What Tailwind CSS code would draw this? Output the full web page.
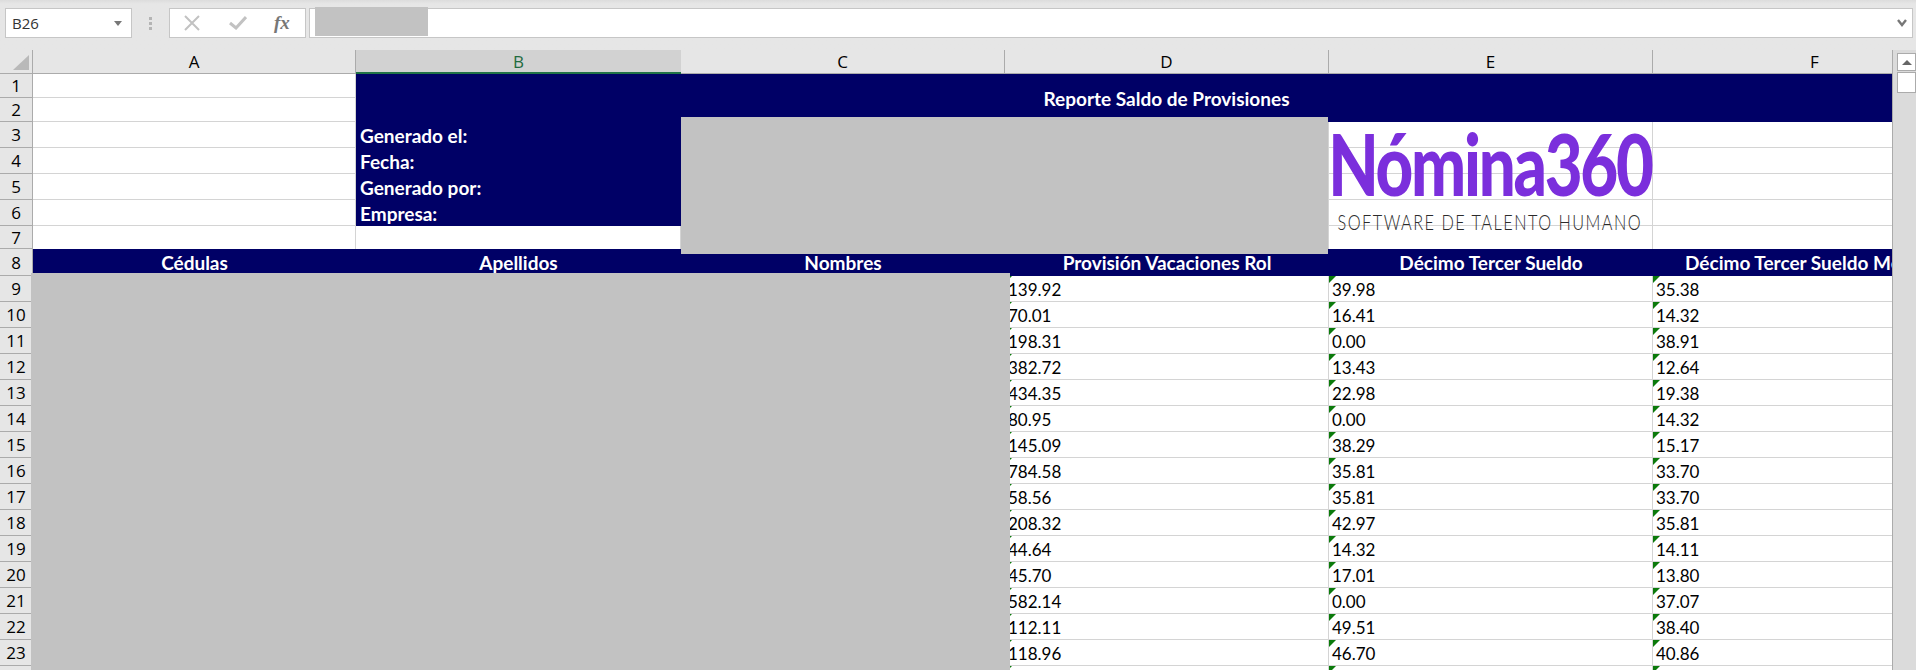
<!DOCTYPE html>
<html lang="es">
<head>
    <meta charset="UTF-8">
    <title>Reporte Saldo de Provisiones</title>
    <script src="https://cdn.jsdelivr.net/npm/@tailwindcss/browser@4"></script>
</head>

<body class="bg-[#e6e6e6] w-[1916px] h-[670px] overflow-hidden relative font-['Lato',sans-serif]">

    <!-- formula bar -->
    <div class="h-[50px] flex items-start pt-2 bg-gradient-to-b from-[#dcdcdc] via-[#e6e6e6] via-[8%] to-[#e6e6e6] font-['Open_Sans',sans-serif]">
        <div class="ml-[5px] w-[127px] h-[30px] bg-white border border-[#c6c6c6] flex items-center justify-between pl-[6px] pr-[9px] text-[15px] text-[#333]">
            <span>B26</span>
            <span class="w-0 h-0 border-x-[4px] border-x-transparent border-t-[5px] border-t-[#777]"></span>
        </div>
        <div class="w-[37px] h-[30px] flex flex-col items-center justify-center gap-[2px]">
            <span class="w-[3px] h-[3px] bg-[#b4b4b4]"></span>
            <span class="w-[3px] h-[3px] bg-[#b4b4b4]"></span>
            <span class="w-[3px] h-[3px] bg-[#b4b4b4]"></span>
        </div>
        <div class="w-[137px] h-[30px] bg-white border border-[#c6c6c6] flex items-center pl-[14px]">
            <svg class="w-[16px] h-[16px]" viewBox="0 0 16 16" fill="none" stroke="#c2c2c2" stroke-width="2"><path d="M1 1 L15 15 M15 1 L1 15"/></svg>
            <svg class="w-[18px] h-[14px] ml-[29px]" viewBox="0 0 18 14" fill="none" stroke="#c2c2c2" stroke-width="3"><path d="M1 7 L7 12 L17 1"/></svg>
            <span class="ml-[27px] font-['Liberation_Serif',serif] italic font-bold text-[19px] text-[#777]">fx</span>
        </div>
        <div class="ml-[3px] w-[1604px] h-[30px] bg-white border border-[#c6c6c6] flex items-center justify-end pr-[5px]">
            <svg class="w-[10px] h-[8px]" viewBox="0 0 10 8" fill="none" stroke="#777" stroke-width="2.4"><path d="M1 1 L5 6 L9 1"/></svg>
        </div>
    </div>

    <div class="flex h-[620px]">
        <!-- sheet -->
        <div id="sheet" class="w-[1893px] shrink-0 overflow-hidden border-r border-[#ababab] grid grid-cols-[33px_323px_325px_324px_324px_324px_324px] grid-rows-[24px_24px_24px_26px_26px_26px_26px_23px_27px] auto-rows-[26px] bg-white text-[17px] leading-none text-black">

            <!-- column headers -->
            <div class="relative bg-[#e6e6e6] border-r border-b border-[#ababab]">
                <span class="absolute right-[3px] bottom-[3px] w-0 h-0 border-l-[16px] border-l-transparent border-b-[15px] border-b-[#b9b9b9]"></span>
            </div>
            <div class="border-r border-b border-[#ababab] bg-[#e6e6e6] flex items-center justify-center font-['Open_Sans',sans-serif] text-[17px]">A</div>
            <div class="bg-[#d2d2d2] border-b-2 border-[#217346] flex items-center justify-center font-['Open_Sans',sans-serif] text-[17px] text-[#1f6b3f]">B</div>
            <div class="border-r border-b border-[#ababab] bg-[#e6e6e6] flex items-center justify-center font-['Open_Sans',sans-serif] text-[17px]">C</div>
            <div class="border-r border-b border-[#ababab] bg-[#e6e6e6] flex items-center justify-center font-['Open_Sans',sans-serif] text-[17px]">D</div>
            <div class="border-r border-b border-[#ababab] bg-[#e6e6e6] flex items-center justify-center font-['Open_Sans',sans-serif] text-[17px]">E</div>
            <div class="border-r border-b border-[#ababab] bg-[#e6e6e6] flex items-center justify-center font-['Open_Sans',sans-serif] text-[17px]">F</div>

            <!-- rows 1-2 -->
            <div class="bg-[#e6e6e6] border-r border-b border-[#ababab] flex items-center justify-center font-['Open_Sans',sans-serif] text-[17px]">1</div>
            <div class="border-r border-b border-[#d4d4d4]"></div>
            <div class="col-span-5 row-span-2 bg-[#000066] text-white font-bold text-[19px] flex items-center justify-center">Reporte Saldo de Provisiones</div>
            <div class="bg-[#e6e6e6] border-r border-b border-[#ababab] flex items-center justify-center font-['Open_Sans',sans-serif] text-[17px]">2</div>
            <div class="border-r border-b border-[#d4d4d4]"></div>

            <!-- rows 3-6 -->
            <div class="bg-[#e6e6e6] border-r border-b border-[#ababab] flex items-center justify-center font-['Open_Sans',sans-serif] text-[17px]">3</div>
            <div class="border-r border-b border-[#d4d4d4]"></div>
            <div class="bg-[#000066] text-white font-bold text-[19px] flex items-center pl-[4px]">Generado el:</div>
            <div class="border-r border-b border-[#d4d4d4]"></div>
            <div class="border-r border-b border-[#d4d4d4]"></div>
            <div class="border-r border-b border-[#d4d4d4]"></div>
            <div class="border-b border-[#d4d4d4]"></div>

            <div class="bg-[#e6e6e6] border-r border-b border-[#ababab] flex items-center justify-center font-['Open_Sans',sans-serif] text-[17px]">4</div>
            <div class="border-r border-b border-[#d4d4d4]"></div>
            <div class="bg-[#000066] text-white font-bold text-[19px] flex items-center pl-[4px]">Fecha:</div>
            <div class="border-r border-b border-[#d4d4d4]"></div>
            <div class="border-r border-b border-[#d4d4d4]"></div>
            <div class="border-r border-b border-[#d4d4d4]"></div>
            <div class="border-b border-[#d4d4d4]"></div>

            <div class="bg-[#e6e6e6] border-r border-b border-[#ababab] flex items-center justify-center font-['Open_Sans',sans-serif] text-[17px]">5</div>
            <div class="border-r border-b border-[#d4d4d4]"></div>
            <div class="bg-[#000066] text-white font-bold text-[19px] flex items-center pl-[4px]">Generado por:</div>
            <div class="border-r border-b border-[#d4d4d4]"></div>
            <div class="border-r border-b border-[#d4d4d4]"></div>
            <div class="border-r border-b border-[#d4d4d4]"></div>
            <div class="border-b border-[#d4d4d4]"></div>

            <div class="bg-[#e6e6e6] border-r border-b border-[#ababab] flex items-center justify-center font-['Open_Sans',sans-serif] text-[17px]">6</div>
            <div class="border-r border-b border-[#d4d4d4]"></div>
            <div class="bg-[#000066] text-white font-bold text-[19px] flex items-center pl-[4px]">Empresa:</div>
            <div class="border-r border-b border-[#d4d4d4]"></div>
            <div class="border-r border-b border-[#d4d4d4]"></div>
            <div class="border-r border-b border-[#d4d4d4]"></div>
            <div class="border-b border-[#d4d4d4]"></div>

            <!-- row 7 -->
            <div class="bg-[#e6e6e6] border-r border-b border-[#ababab] flex items-center justify-center font-['Open_Sans',sans-serif] text-[17px]">7</div>
            <div class="border-r border-[#d4d4d4]"></div>
            <div class="border-r border-[#d4d4d4]"></div>
            <div class="border-r border-[#d4d4d4]"></div>
            <div class="border-r border-[#d4d4d4]"></div>
            <div class="border-r border-[#d4d4d4]"></div>
            <div></div>

            <!-- row 8 -->
            <div class="bg-[#e6e6e6] border-r border-b border-[#ababab] flex items-center justify-center font-['Open_Sans',sans-serif] text-[17px]">8</div>
            <div class="bg-[#000066] text-white font-bold text-[19px] flex items-center justify-center">Cédulas</div>
            <div class="bg-[#000066] text-white font-bold text-[19px] flex items-center justify-center">Apellidos</div>
            <div class="bg-[#000066] text-white font-bold text-[19px] flex items-center justify-center">Nombres</div>
            <div class="bg-[#000066] text-white font-bold text-[19px] flex items-center justify-center">Provisión Vacaciones Rol</div>
            <div class="bg-[#000066] text-white font-bold text-[19px] flex items-center justify-center">Décimo Tercer Sueldo</div>
            <div class="bg-[#000066] text-white font-bold text-[19px] flex items-center justify-center whitespace-nowrap">Décimo Tercer Sueldo Mensual</div>
        </div>

        <!-- scrollbar -->
        <div class="flex-1 bg-[#dbdbdb] flex flex-col items-end">
            <div class="mt-[3px] w-[19px] h-[18px] bg-white border border-[#ababab] flex items-center justify-center">
                <span class="w-0 h-0 border-x-[5px] border-x-transparent border-b-[5px] border-b-[#666]"></span>
            </div>
            <div class="mt-px w-[19px] h-[21px] bg-white border border-[#ababab]"></div>
        </div>
    </div>

    <!-- redacted blocks -->
    <div class="absolute left-[315px] top-[7px] w-[113px] h-[29px] bg-[#c2c2c2]"></div>
    <div class="absolute left-[681px] top-[117px] w-[647px] h-[137px] bg-[#c2c2c2]"></div>
    <div class="absolute left-[31px] top-[273px] w-[979px] h-[397px] bg-[#c2c2c2]"></div>

    <!-- logo -->
    <div class="absolute left-[1328px] top-[121px] w-[324px] h-[126px] flex flex-col items-center pointer-events-none">
        <div class="font-['Lato',sans-serif] font-black text-[#7b2fdc] text-[85px] leading-[84px] tracking-[-3px] whitespace-nowrap scale-x-[0.77]">Nómina360</div>
        <div class="mt-[5px] font-['Lato',sans-serif] font-light text-[#2b2b2b] text-[22px] leading-[24px] tracking-[2px] whitespace-nowrap scale-x-[0.74]">SOFTWARE DE TALENTO HUMANO</div>
    </div>

    <script>
        // D, E, F values for rows 9-23
        const rows = [
            ['139.92', '39.98', '35.38'],
            ['70.01', '16.41', '14.32'],
            ['198.31', '0.00', '38.91'],
            ['382.72', '13.43', '12.64'],
            ['434.35', '22.98', '19.38'],
            ['80.95', '0.00', '14.32'],
            ['145.09', '38.29', '15.17'],
            ['784.58', '35.81', '33.70'],
            ['58.56', '35.81', '33.70'],
            ['208.32', '42.97', '35.81'],
            ['44.64', '14.32', '14.11'],
            ['45.70', '17.01', '13.80'],
            ['582.14', '0.00', '37.07'],
            ['112.11', '49.51', '38.40'],
            ['118.96', '46.70', '40.86'],
            ['', '', '']
        ];
        const rowHead = "bg-[#e6e6e6] border-r border-b border-[#ababab] flex items-center justify-center font-['Open_Sans',sans-serif] text-[17px]";
        const blank = "border-r border-b border-[#d4d4d4]";
        const cell = "relative border-r border-b border-[#d4d4d4] flex items-center pl-[3px] pt-[2px]";
        const mark = '<span class="absolute left-0 top-0 w-0 h-0 border-t-[7px] border-t-[#0b7a0b] border-r-[7px] border-r-transparent"></span>';
        let html = '';
        rows.forEach((r, i) => {
            html += `<div class="${rowHead}">${i + 9}</div><div class="${blank}"></div><div class="${blank}"></div><div class="${blank}"></div>`;
            r.forEach(v => { html += `<div class="${cell}">${mark}${v}</div>`; });
        });
        document.getElementById('sheet').insertAdjacentHTML('beforeend', html);
    </script>
</body>
</html>
